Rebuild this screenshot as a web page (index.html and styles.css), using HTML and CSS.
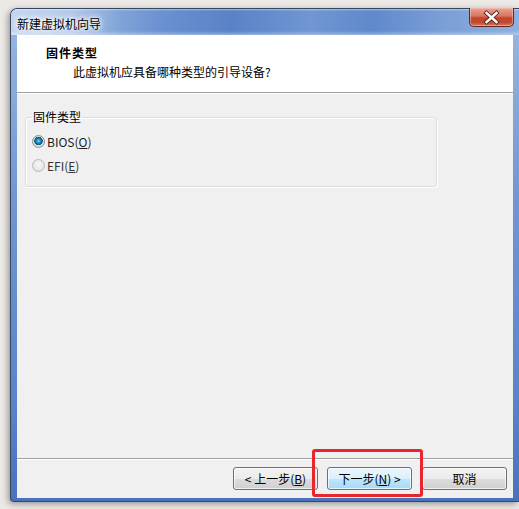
FILE: index.html
```html
<!DOCTYPE html>
<html lang="zh-CN">
<head>
<meta charset="utf-8">
<title>新建虚拟机向导</title>
<link rel="stylesheet" href="styles.css">
</head>
<body>
<div class="window">
  <div class="titlebar">
    <span class="title">新建虚拟机向导</span>
    <div class="close">
      <svg width="45" height="19" viewBox="0 0 45 19">
        <path d="M17.5 5 L27.5 14 M27.5 5 L17.5 14" stroke="#5a2018" stroke-width="4.2" stroke-linecap="square" fill="none"/>
        <path d="M17.5 5 L27.5 14 M27.5 5 L17.5 14" stroke="#ffffff" stroke-width="2.4" stroke-linecap="square" fill="none"/>
      </svg>
    </div>
  </div>
  <div class="client">
    <div class="header">
      <div class="heading">固件类型</div>
      <div class="subtitle">此虚拟机应具备哪种类型的引导设备?</div>
    </div>
    <div class="content">
      <fieldset class="group">
        <legend>固件类型</legend>
        <div class="option"><span class="radio checked"></span><span class="label">BIOS(<u>O</u>)</span></div>
        <div class="option"><span class="radio"></span><span class="label">EFI(<u>E</u>)</span></div>
      </fieldset>
    </div>
    <div class="footer">
      <button class="btn">&lt; 上一步(<u>B</u>)</button>
      <button class="btn primary">下一步(<u>N</u>) &gt;</button>
      <button class="btn cancel">取消</button>
    </div>
  </div>
</div>
<div class="highlight"></div>
</body>
</html>
```
FILE: styles.css
```css
html, body {
  margin: 0;
  padding: 0;
}
body {
  width: 519px;
  height: 509px;
  overflow: hidden;
  background: #ebe8e5;
  font-family: "Noto Sans CJK SC", "Noto Sans", sans-serif;
  font-size: 12px;
  color: #000;
  position: relative;
}
.window {
  box-sizing: border-box;
  margin: 8px 0 0 10px;
  width: 509px;
  height: 494px;
  border: 1px solid #37475f;
  border-right: none;
  border-radius: 7px 0 0 4px;
  background: linear-gradient(to bottom, #9ab8e2 0%, #6f96d2 40%, #5a84c7 80%, #4872bb 100%);
  box-shadow: -2px 2px 6px rgba(0,0,0,0.35);
  display: flex;
  flex-direction: column;
  padding: 0 6px 3px 6px;
}
.titlebar {
  height: 26px;
  display: flex;
  align-items: flex-start;
  margin: 0 -6px;
  padding: 0 6px;
  border-radius: 6px 0 0 0;
  background:
    linear-gradient(to bottom, rgba(255,255,255,0.45) 0px, rgba(255,255,255,0) 2px, rgba(255,255,255,0) 22px, rgba(255,255,255,0.35) 26px),
    linear-gradient(to right, #c4d6ee 0px, #b3c9ea 60px, #80a3d8 110px, #6a91d0 150px, #5a82c6 220px, #7097d3 300px, #6089cb 360px, #7a9ed6 430px, #8fafdf 509px);
}
.title {
  margin-top: 8px;
  line-height: 14px;
  text-shadow: 0 0 4px #fff, 0 0 6px #fff, 0 0 8px rgba(255,255,255,0.9);
}
.close {
  margin-left: auto;
  margin-right: -1px;
  margin-top: -1px;
  width: 45px;
  height: 19px;
  box-sizing: border-box;
  border: 1px solid #5e2a22;
  border-top: none;
  border-radius: 0 0 5px 5px;
  background: linear-gradient(to bottom, #e8a595 0%, #d8745f 45%, #c5442b 55%, #c14a32 80%, #d77a62 100%);
  box-shadow: inset 0 0 0 1px rgba(255,200,190,0.5);
  display: flex;
  align-items: center;
  justify-content: center;
}
.close svg {
  display: block;
  margin: -1px;
}
.client {
  flex: 1;
  background: #f0f0f0;
  display: flex;
  flex-direction: column;
}
.header {
  background: #ffffff;
  border-bottom: 1px solid #a0a0a0;
  box-shadow: 0 1px 0 #ffffff;
  padding: 11px 0 0 29px;
  box-sizing: content-box;
  height: 46px;
}
.heading {
  font-weight: bold;
  letter-spacing: 1px;
  line-height: 14px;
}
.subtitle {
  margin-top: 5px;
  margin-left: 27px;
  line-height: 14px;
}
.content {
  padding: 16px 8px 0 8px;
}
.group {
  margin: 0;
  width: 412px;
  box-sizing: border-box;
  border: 1px solid #d5dfe5;
  border-radius: 3px;
  box-shadow: inset 1px 1px 0 #ffffff, 1px 1px 0 #ffffff;
  padding: 0 6px 14px 6px;
}
.group legend {
  padding: 0 1px;
  line-height: 16px;
}
.option {
  display: flex;
  align-items: center;
  height: 13px;
  margin-top: 11px;
}
.option:first-of-type {
  margin-top: 10px;
}
.radio {
  width: 11px;
  height: 11px;
  border-radius: 50%;
  border: 1px solid #8e8f8f;
  background: radial-gradient(circle at 50% 40%, #f4f4f4 0, #e2e2e2 60%, #cfcfcf 100%);
  box-sizing: content-box;
  flex: none;
}
.option:nth-of-type(2) .radio {
  border-color: #b8b8b8;
  background: radial-gradient(circle at 50% 40%, #f6f6f6 0, #e8e8e8 60%, #d8d8d8 100%);
}
.radio.checked {
  background:
    radial-gradient(circle at 50% 45%, #a6e0fa 0, #2a9cd4 1.5px, #0f5f92 3.5px, #135c8a 4px, rgba(0,0,0,0) 4.5px),
    radial-gradient(circle at 50% 40%, #f4f4f4 0, #dcdcdc 70%, #c8c8c8 100%);
}
.label {
  margin-left: 2px;
  line-height: 13px;
  color: #1a1a1a;
}
.option:nth-of-type(2) .label {
  color: #333;
}
.footer {
  margin-top: auto;
  border-top: 1px solid #a0a0a0;
  box-shadow: inset 0 1px 0 #ffffff;
  display: flex;
  justify-content: flex-end;
  align-items: flex-start;
  padding: 8px 6px 0 0;
  box-sizing: border-box;
  height: 40px;
}
.btn {
  width: 85px;
  height: 23px;
  margin: 0 0 0 9px;
  padding: 0;
  font-family: inherit;
  font-size: 12px;
  line-height: 14px;
  color: #000;
  border: 1px solid #707070;
  border-radius: 3px;
  background: linear-gradient(to bottom, #f2f2f2 0%, #ebebeb 50%, #dddddd 51%, #cfcfcf 100%);
  box-shadow: inset 0 0 0 1px rgba(255,255,255,0.7);
}
.btn.primary {
  border-color: #3c7fb1;
  background: linear-gradient(to bottom, #eaf6fd 0%, #d9f0fc 50%, #bee6fd 51%, #a7d9f5 100%);
}
.btn.cancel {
  margin-left: 10px;
}
.highlight {
  position: absolute;
  left: 312px;
  top: 449px;
  width: 111px;
  height: 48px;
  box-sizing: border-box;
  border: 3px solid #e8262b;
  border-radius: 3px;
}
```
